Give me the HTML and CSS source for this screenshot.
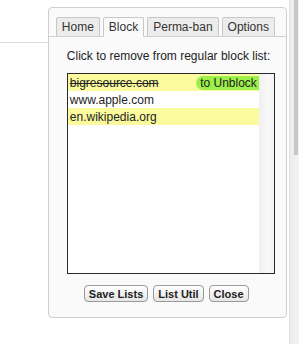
FILE: index.html
```html
<!DOCTYPE html>
<html lang="en">
<head>
  <meta charset="UTF-8" />
  <title>Block list</title>
  <link rel="stylesheet" href="styles.css">
</head>
<body>
  <div class="page">
    <div class="page-left">
      <div class="rule"></div>
    </div>

    <div class="panel">
      <div class="tabs">
        <div class="tab">Home</div>
        <div class="tab active">Block</div>
        <div class="tab">Perma-ban</div>
        <div class="tab">Options</div>
      </div>

      <div class="panel-body">
        <p class="hint">Click to remove from regular block list:</p>
        <div class="listbox">
          <div class="list-items">
            <div class="item odd removed">
              <span class="site">bigresource.com</span>
              <span class="pill">to Unblock</span>
            </div>
            <div class="item">www.apple.com</div>
            <div class="item odd">en.wikipedia.org</div>
          </div>
          <div class="list-track"></div>
        </div>

        <div class="buttons">
          <button>Save Lists</button>
          <button>List Util</button>
          <button>Close</button>
        </div>
      </div>
    </div>

    <div class="page-scroll">
      <div class="thumb"></div>
    </div>
  </div>
</body>
</html>
```

FILE: styles.css
```css
body {
  margin: 0;
  background-color: white;
  font-family: 'Liberation Sans', Arial, sans-serif;
}

.page {
  display: flex;
  height: 344px;
}

.page-left {
  width: 48px;
  padding-top: 42px;
}

.rule {
  height: 1px;
  background-color: #dcdcdc;
}

.panel {
  width: 240px;
  height: 311px;
  margin-top: 7px;
  border: 1px solid #cfcfcf;
  border-radius: 4px;
  background-color: #fafafa;
  box-sizing: border-box;
}

.tabs {
  display: flex;
  gap: 3px;
  padding: 9px 0 0 7px;
  border-bottom: 1px solid #cfcfcf;
}

.tab {
  height: 18px;
  line-height: 18px;
  padding: 0 5px;
  font-size: 12px;
  color: #333;
  background-color: #ececec;
  border: 1px solid #c8c8c8;
  border-bottom: none;
  border-radius: 2px 2px 0 0;
  margin-bottom: -1px;
}

.tab.active {
  background-color: #fafafa;
  border-bottom: 1px solid #fafafa;
}

.panel-body {
  padding: 11px 0 0 18px;
}

.hint {
  margin: 0;
  font-size: 12px;
  line-height: 16px;
  color: #222;
  white-space: nowrap;
}

.listbox {
  display: flex;
  width: 206px;
  height: 199px;
  margin-top: 9px;
  border: 1px solid #2a2a2a;
  background-color: white;
}

.list-items {
  flex: 1;
}

.list-track {
  width: 15px;
  background: linear-gradient(to right, #f0f0f0, #f8f8f8 60%, #f2f2f2);
}

.item {
  display: flex;
  align-items: center;
  justify-content: space-between;
  height: 17px;
  padding-left: 2px;
  font-size: 12px;
  color: #222;
}

.item.odd {
  background-color: #fbfb9e;
}

.removed .site {
  text-decoration: line-through;
}

.pill {
  height: 14px;
  line-height: 14px;
  padding: 0 2px 0 4px;
  background-color: #9cf047;
  border-radius: 7px 0 0 7px;
  font-size: 12px;
}

.buttons {
  display: flex;
  gap: 5px;
  margin: 11px 0 0 17px;
}

.buttons button {
  height: 17px;
  padding: 0 4px;
  font-family: 'Liberation Sans', Arial, sans-serif;
  font-size: 11px;
  font-weight: bold;
  color: #222;
  background: linear-gradient(#ffffff, #e6e6e6);
  border: 1px solid #9a9a9a;
  border-radius: 4px;
}

.page-scroll {
  width: 9px;
  margin-left: 2px;
  background: linear-gradient(to right, #ececec, #f4f4f4);
  border-left: 1px solid #e2e2e2;
}

.thumb {
  width: 4px;
  height: 155px;
  margin-left: 4px;
  background-color: #c6c6c6;
}
```
